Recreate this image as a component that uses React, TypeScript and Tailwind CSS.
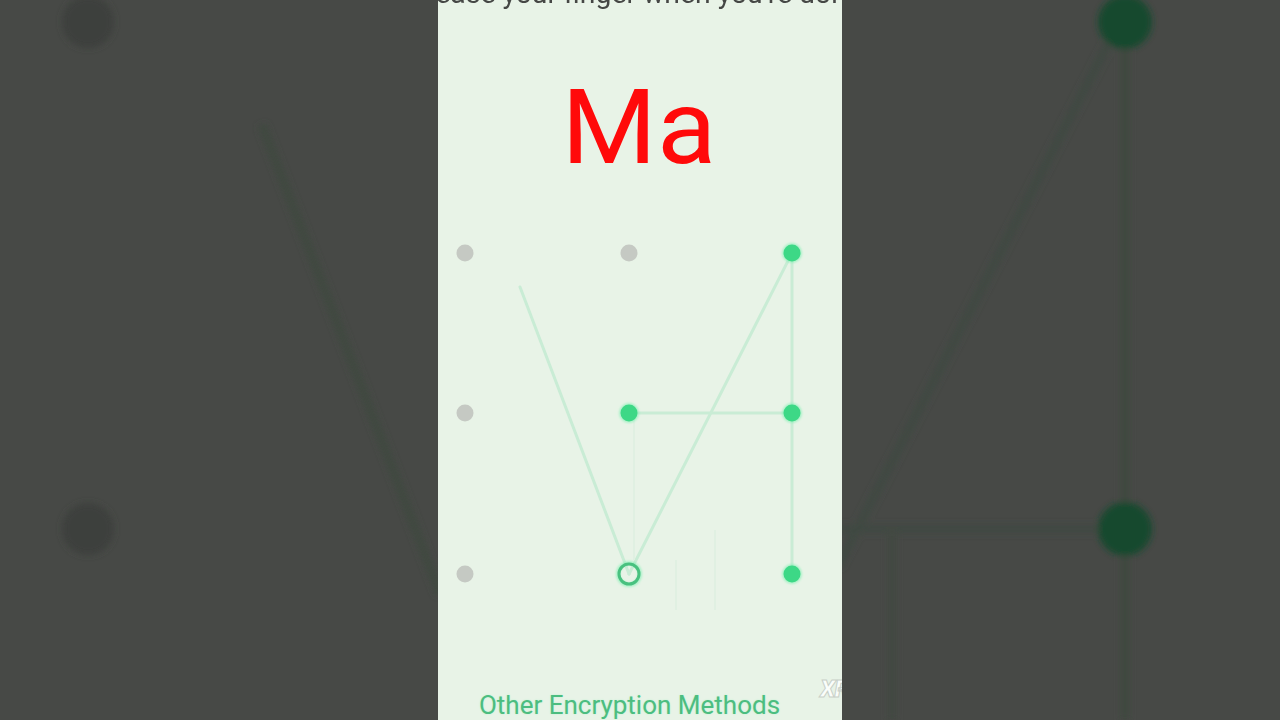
import React from "react";

const FONT = { fontFamily: "Roboto, 'Noto Sans', sans-serif" };

function SideLeft() {
  return (
    <svg width="438" height="720" viewBox="0 0 438 720" className="block">
      <defs>
        <filter id="bl" x="-20%" y="-20%" width="140%" height="140%">
          <feGaussianBlur stdDeviation="3" />
        </filter>
      </defs>
      <rect width="438" height="720" fill="#474946" />
      <g filter="url(#bl)">
        <circle cx="88" cy="22" r="26" fill="#3e403c" />
        <circle cx="88" cy="529" r="26" fill="#3e403c" />
        <line x1="262" y1="125" x2="440" y2="594" stroke="#3f4840" strokeWidth="9" />
      </g>
    </svg>
  );
}

function SideRight() {
  return (
    <svg width="438" height="720" viewBox="0 0 438 720" className="block">
      <defs>
        <filter id="br" x="-20%" y="-20%" width="140%" height="140%">
          <feGaussianBlur stdDeviation="3" />
        </filter>
      </defs>
      <rect width="438" height="720" fill="#474946" />
      <g filter="url(#br)">
        <line x1="283" y1="22" x2="283" y2="720" stroke="#3f4840" strokeWidth="10" />
        <line x1="268" y1="40" x2="-4" y2="566" stroke="#414842" strokeWidth="9" />
        <line x1="-4" y1="529" x2="260" y2="529" stroke="#414842" strokeWidth="9" />
        <line x1="50" y1="529" x2="50" y2="720" stroke="#434943" strokeWidth="10" />
        <circle cx="283" cy="22" r="27" fill="#154a2e" />
        <circle cx="283" cy="529" r="27" fill="#154a2e" />
      </g>
    </svg>
  );
}

function Pattern() {
  // dot centres relative to the pattern box
  const cols = [27, 191, 354];
  const rows = [23, 183, 344];
  const gray = "#c5c9c3";
  const green = "#3dd886";
  return (
    <svg width="404" height="380" viewBox="0 0 404 380" className="block">
      <defs>
        <filter id="gl" x="-50%" y="-50%" width="200%" height="200%">
          <feGaussianBlur stdDeviation="1.2" />
        </filter>
      </defs>
      <g stroke="#c9ecd5" strokeWidth="3" strokeLinecap="round" fill="none">
        <line x1={cols[2]} y1={rows[0]} x2={cols[1]} y2={rows[2]} />
        <line x1={cols[1]} y1={rows[1]} x2={cols[2]} y2={rows[1]} />
        <line x1={cols[2]} y1={rows[0]} x2={cols[2]} y2={rows[2]} />
        <line x1={cols[1]} y1={rows[2]} x2={82} y2={57} />
      </g>
      <g stroke="#e0f0e2" strokeWidth="2" fill="none">
        <line x1={196} y1={190} x2={196} y2={330} />
        <line x1={238} y1={330} x2={238} y2={380} />
        <line x1={277} y1={300} x2={277} y2={380} />
      </g>
      <circle cx={cols[0]} cy={rows[0]} r="8.5" fill={gray} />
      <circle cx={cols[1]} cy={rows[0]} r="8.5" fill={gray} />
      <circle cx={cols[0]} cy={rows[1]} r="8.5" fill={gray} />
      <circle cx={cols[0]} cy={rows[2]} r="8.5" fill={gray} />
      <g filter="url(#gl)" opacity="0.6">
        <circle cx={cols[2]} cy={rows[0]} r="10" fill="#7bf0b0" />
        <circle cx={cols[1]} cy={rows[1]} r="10" fill="#7bf0b0" />
        <circle cx={cols[2]} cy={rows[1]} r="10" fill="#7bf0b0" />
        <circle cx={cols[2]} cy={rows[2]} r="10" fill="#7bf0b0" />
        <circle cx={cols[1]} cy={rows[2]} r="11" fill="none" stroke="#7bf0b0" strokeWidth="4" />
      </g>
      <circle cx={cols[2]} cy={rows[0]} r="8.5" fill={green} />
      <circle cx={cols[1]} cy={rows[1]} r="8.5" fill={green} />
      <circle cx={cols[2]} cy={rows[1]} r="8.5" fill={green} />
      <circle cx={cols[2]} cy={rows[2]} r="8.5" fill={green} />
      <circle cx={cols[1]} cy={rows[2]} r="10" fill="none" stroke="#48c17f" strokeWidth="3" />
    </svg>
  );
}

export default function App() {
  return (
    <div className="flex h-[720px] w-[1280px] overflow-hidden bg-[#474946]" style={FONT}>
      <SideLeft />
      <div className="relative flex h-[720px] w-[404px] shrink-0 flex-col items-center overflow-hidden bg-[#e8f3e7]">
        <div className="mt-[-21px] mr-[22px] scale-x-[1.05] whitespace-nowrap text-[27px] leading-[30px] text-[#454745]">
          Release your finger when you're done
        </div>
        <div className="mt-[68px] mr-[2px] scale-x-[1.06] text-[103px] leading-[102px] text-[#ff0a0a]">Ma</div>
        <div className="mt-[51px]">
          <Pattern />
        </div>
        <div className="mt-[80px] mr-[21px] whitespace-nowrap text-[26px] leading-[30px] text-[#4cbd80] [text-shadow:0_0_2px_#b9f0cf]">
          Other Encryption Methods
        </div>
        <div className="absolute bottom-[19px] right-[-7px] text-[24px] font-black italic leading-none tracking-tight text-white/80 [-webkit-text-stroke:1px_#c8d0c8]">
          XR
        </div>
      </div>
      <SideRight />
    </div>
  );
}
